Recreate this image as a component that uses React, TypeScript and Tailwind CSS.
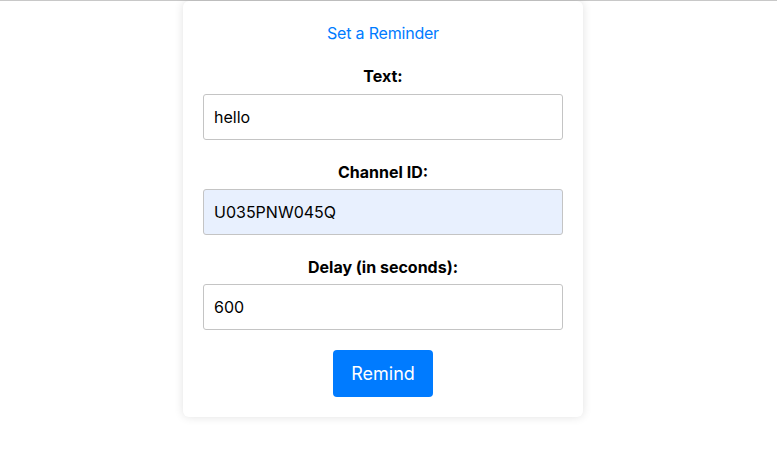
import React from "react";

export default function App() {
  const font = { fontFamily: "Inter, 'Liberation Sans', sans-serif" };
  return (
    <div className="min-h-[452px] bg-white border-t border-[#c8c8c8]" style={font}>
      <div className="w-[766px] flex justify-center">
        <div className="w-[400px] bg-white rounded-[6px] shadow-[0_0_10px_rgba(0,0,0,0.12)] px-5 pt-5 pb-5 flex flex-col">
          <div className="text-center text-[16px] leading-6 text-[#007bff] mb-[19px] tracking-[-0.2px]">Set a Reminder</div>
          <div className="text-center text-[16px] leading-6 font-bold text-black mb-[6px]">Text:</div>
          <input
            readOnly
            value="hello"
            className="h-[46px] w-full border border-[#c4c4c4] rounded-[3px] px-[10px] text-[16px] text-black bg-white outline-none"
          />
          <div className="text-center text-[16px] leading-6 font-bold text-black mt-5 mb-[5px]">Channel ID:</div>
          <input
            readOnly
            value="U035PNW045Q"
            className="h-[46px] w-full border border-[#c4c4c4] rounded-[3px] px-[10px] text-[16px] text-black bg-[#e8f0fe] outline-none"
          />
          <div className="text-center text-[16px] leading-6 font-bold text-black mt-5 mb-[5px]">Delay (in seconds):</div>
          <input
            readOnly
            value="600"
            className="h-[46px] w-full border border-[#c4c4c4] rounded-[3px] px-[10px] text-[16px] text-black bg-white outline-none"
          />
          <div className="flex justify-center mt-5">
            <button className="w-[100px] h-[47px] bg-[#007bff] text-white text-[18px] rounded-[4px]">Remind</button>
          </div>
        </div>
      </div>
    </div>
  );
}
